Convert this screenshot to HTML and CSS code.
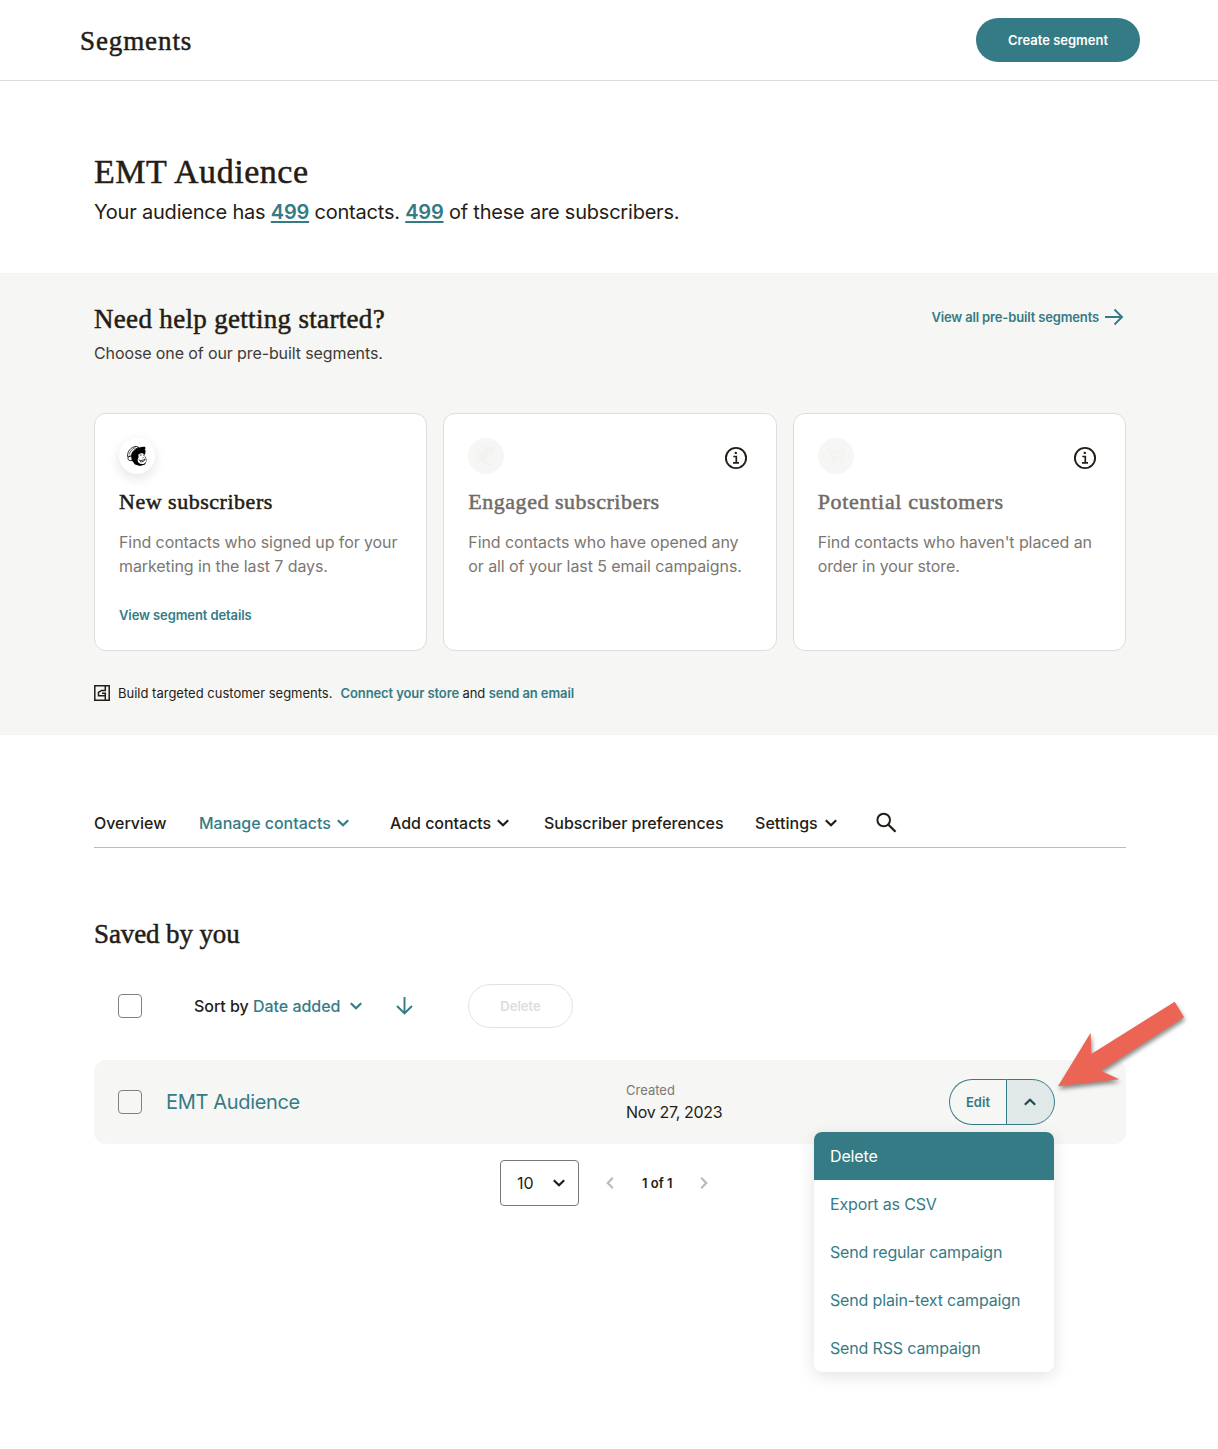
FILE: index.html
```html
<!DOCTYPE html>
<html lang="en">
<head>
<meta charset="utf-8">
<title>Segments</title>
<link rel="stylesheet" href="styles.css">
</head>
<body>
<svg class="defs" width="0" height="0">
  <symbol id="chev" viewBox="0 0 14 10"><path d="M1.800 2.200 7 7.200l5.200-5" fill="none" stroke="currentColor" stroke-width="2.200"/></symbol>
  <symbol id="info" viewBox="0 0 24 24"><circle cx="12" cy="12" r="10.100" fill="none" stroke="currentColor" stroke-width="1.900"/><circle cx="11.800" cy="6.900" r="1.200" fill="currentColor"/><path d="M9.300 10.500h3v6M9 16.900h6" fill="none" stroke="currentColor" stroke-width="1.700"/></symbol>
  <symbol id="chimp" viewBox="0 0 22 22">
    <path d="M5 8 9 5l8-1 2.500 4-1 2 2.500 5-2 4.500-5 1.500-5-1.500L5.500 15z" fill="currentColor"/>
    <path d="M12.200 9.800c1.800-2 5.300-2.200 6.300.2.300 1 .2 1.800.5 2.600 1.400.5 2 1.800 1.300 3.300-.8 2.300-3 3.400-5.300 3-2.500-.4-3.800-2.300-3.300-4.300.6-1.600 1.300-2.300.5-4.800z" fill="var(--face)"/>
    <path d="M13.800 10.200l1.800-.3M17.100 10l1 .2M12.800 15c2 .9 4.200.5 6.600-1.200-.5 2.200-3.500 3.700-5.400 2.800M16.600 12.500l.9.100" fill="none" stroke="currentColor" stroke-width=".8"/>
    <path d="M1.500 11.500C1.300 6.500 4.500 2.200 10 1.300l3 1.200C8.500 3.800 6 6.500 5.300 11z" fill="var(--face)" stroke="currentColor" stroke-width=".8"/>
    <path d="M3.300 9.500C4 6.300 6.300 3.500 9.500 2.500" fill="none" stroke="currentColor" stroke-width=".6"/>
    <path d="M8.500 5.300C11 2.600 15 1.500 18.800 1.700c.9.700.9 2-.1 3.100 1 .6 1.300 1.500.6 2.400-3-1.200-6.800-1-9.800.6z" fill="currentColor"/>
    <path d="M5.700 11.800c-1.900-1.200-4-.2-3.800 1.700.2 1.800 2.200 2.700 4.300 1.800z" fill="var(--face)" stroke="currentColor" stroke-width=".9"/>
  </symbol>
</svg>

<header class="topbar">
  <h1 class="topbar-title">Segments</h1>
  <button class="btn-primary">Create segment</button>
</header>

<section class="hero">
  <h2 class="hero-title">EMT Audience</h2>
  <p class="hero-text">Your audience has <a>499</a> contacts. <a>499</a> of these are subscribers.</p>
</section>

<section class="help">
  <div class="help-head">
    <div>
      <h2 class="heading">Need help getting started?</h2>
      <p class="help-sub">Choose one of our pre-built segments.</p>
    </div>
    <a class="view-all">View all pre-built segments
      <svg width="20" height="18" viewBox="0 0 20 18"><path d="M1 9h17M10.500 1.500 18 9l-7.500 7.500" fill="none" stroke="currentColor" stroke-width="1.900"/></svg>
    </a>
  </div>
  <div class="cards">
    <article class="card">
      <div class="card-top"><span class="badge raised"><svg width="22" height="22"><use href="#chimp"/></svg></span></div>
      <h3 class="card-title">New subscribers</h3>
      <p class="card-text">Find contacts who signed up for your marketing in the last 7 days.</p>
      <a class="card-link">View segment details</a>
    </article>
    <article class="card muted">
      <div class="card-top"><span class="badge"><svg width="22" height="22"><use href="#chimp"/></svg></span><span class="info"><svg width="24" height="24"><use href="#info"/></svg></span></div>
      <h3 class="card-title">Engaged subscribers</h3>
      <p class="card-text">Find contacts who have opened any or all of your last 5 email campaigns.</p>
    </article>
    <article class="card muted">
      <div class="card-top"><span class="badge"><svg width="22" height="22" viewBox="0 0 22 22"><path d="M2 4h3l2.500 10.500H18M5.500 6.500H19L17.500 12H7" fill="none" stroke="currentColor" stroke-width="1.500"/><circle cx="8" cy="18" r="1.500" fill="currentColor"/><circle cx="17" cy="18" r="1.500" fill="currentColor"/></svg></span><span class="info"><svg width="24" height="24"><use href="#info"/></svg></span></div>
      <h3 class="card-title potential">Potential customers</h3>
      <p class="card-text">Find contacts who haven't placed an order in your store.</p>
    </article>
  </div>
  <p class="note">
    <svg width="16" height="16" viewBox="0 0 16 16" fill="none" stroke="currentColor" stroke-width="1.500"><path d="M.8.8h14.400v14.400H.8zM11.300 1v4.500H7.500L4.500 7.500v3.300h6.800M8 8.200h3.300v7"/></svg>
    <span>Build targeted customer segments.</span>
    <span class="note-links"><a>Connect your store</a> and <a>send an email</a></span>
  </p>
</section>

<main class="main">
  <nav class="tabs">
    <a>Overview</a>
    <a class="active">Manage contacts<svg width="14" height="10"><use href="#chev"/></svg></a>
    <a>Add contacts<svg width="14" height="10"><use href="#chev"/></svg></a>
    <a>Subscriber preferences</a>
    <a class="settings">Settings<svg width="14" height="10"><use href="#chev"/></svg></a>
    <a><svg class="search" width="22" height="22" viewBox="0 0 22 22" fill="none" stroke="currentColor" stroke-width="2"><circle cx="7.700" cy="8" r="6.300"/><path d="m12.200 12.500 7.300 7.300" stroke-width="2.300"/></svg></a>
  </nav>

  <h2 class="heading saved">Saved by you</h2>
  <div class="toolbar">
    <span class="checkbox"></span>
    <span class="sort">Sort by <b>Date added</b><svg width="14" height="10"><use href="#chev"/></svg></span>
    <svg class="sort-dir" width="18" height="20" viewBox="0 0 18 20"><path d="M8.500 1v16.500M1 10l7.500 7.300L16 10" fill="none" stroke="currentColor" stroke-width="1.900"/></svg>
    <button class="btn-disabled">Delete</button>
  </div>

  <div class="row">
    <span class="checkbox"></span>
    <a class="row-name">EMT Audience</a>
    <div class="row-meta"><span class="label">Created</span><span class="date">Nov 27, 2023</span></div>
    <div class="split">
      <button class="split-main">Edit</button>
      <button class="split-toggle"><svg class="up" width="14" height="10"><use href="#chev"/></svg></button>
      <ul class="menu">
        <li class="selected">Delete</li>
        <li>Export as CSV</li>
        <li>Send regular campaign</li>
        <li>Send plain-text campaign</li>
        <li>Send RSS campaign</li>
      </ul>
      <svg class="pointer" width="140" height="100" viewBox="0 0 140 100"><path d="M8 89.300 40.700 35.700 41.300 57 124.700 4.700 134 20.300 50.700 73.700 69.300 82.300z" fill="#ec6453"/></svg>
    </div>
  </div>

  <div class="pager">
    <span class="select">10<svg width="14" height="10"><use href="#chev"/></svg></span>
    <svg class="step left" width="14" height="10"><use href="#chev"/></svg>
    <span class="page">1 of 1</span>
    <svg class="step right" width="14" height="10"><use href="#chev"/></svg>
  </div>
</main>
</body>
</html>
```
FILE: styles.css
```css
* { box-sizing: border-box; margin: 0; padding: 0; }
body {
  min-height: 1449px;
  background: #fff;
  color: #241c15;
  font: 16px/24px Inter, "Liberation Sans", sans-serif;
}
.defs { position: absolute; }
svg { display: block; flex: none; }
button { font: inherit; color: inherit; background: none; border: 0; }
a, b { color: #357b86; font-weight: 600; }

h1, h2, h3 {
  font-family: "Liberation Serif", serif;
  font-weight: 400;
  -webkit-text-stroke: .5px currentColor;
}

.topbar {
  display: flex;
  align-items: center;
  justify-content: space-between;
  height: 81px;
  padding: 0 78px 0 80px;
  border-bottom: 1px solid #dedddc;
}
.topbar-title { padding-top: 1px; font-size: 27px; line-height: 36px; letter-spacing: .9px; }
.btn-primary {
  width: 164px;
  height: 44px;
  border-radius: 22px;
  background: #357b86;
  color: #fff;
  font-size: 13px;
  font-weight: 600;
}

.hero { padding: 71px 94px 45px; }
.hero-title { font-size: 34px; line-height: 40px; letter-spacing: .55px; }
.hero-text { margin-top: 4px; font-size: 20px; line-height: 32px; letter-spacing: -.21px; }
.hero-text a { text-decoration: underline; text-decoration-thickness: 2px; text-underline-offset: 2px; }

.help { padding: 28px 92px 32px 94px; background: #f6f6f4; }
.help-head { display: flex; justify-content: space-between; padding-right: 2px; }
.heading { font-size: 27px; line-height: 36px; letter-spacing: .32px; }
.help-sub { margin-top: 4px; color: #403b36; letter-spacing: -.11px; }
.view-all { display: flex; align-items: center; gap: 5px; height: 32px; font-size: 13px; letter-spacing: -.15px; }

.cards { display: grid; grid-template-columns: repeat(3, 1fr); gap: 16px; margin-top: 48px; }
.card {
  height: 238px;
  padding: 24px;
  border: 1px solid #dedddc;
  border-radius: 12px;
  background: #fff;
}
.card-top { display: flex; align-items: flex-end; justify-content: space-between; }
.badge {
  --face: #f6f6f4;
  display: grid;
  place-items: center;
  width: 36px;
  height: 36px;
  border-radius: 50%;
  background: #f6f6f4;
  color: #f2f2f0;
}
.badge.raised { --face: #fff; background: #fff; color: #000; box-shadow: 0 4px 12px rgba(36, 28, 21, .12); }
.info { display: grid; place-items: center; width: 32px; height: 32px; }
.card-title { margin-top: 12px; font-size: 22px; line-height: 32px; letter-spacing: .52px; }
.card-title.potential { letter-spacing: .7px; }
.muted .card-title { color: #716b67; }
.card-text { margin-top: 12px; color: #7c7773; letter-spacing: -.09px; }
.card-link { display: block; margin-top: 27px; font-size: 13px; line-height: 20px; letter-spacing: -.1px; }

.note { display: flex; align-items: center; gap: 8px; margin-top: 32px; font-size: 13px; line-height: 20px; }
.note-links { letter-spacing: -.1px; }

.main { padding: 76px 92px 0 94px; }
.tabs {
  display: grid;
  grid-template-columns: 105px 191px 154px 211px 121px auto;
  height: 37px;
  border-bottom: 1px solid #bdbbb9;
}
.tabs a { display: flex; align-items: center; gap: 5px; height: 24px; color: #241c15; font-weight: 500; letter-spacing: -.03px; }
.tabs a.active { color: #357b86; }
.tabs a.settings { gap: 6px; letter-spacing: .05px; }
.search { color: #241c15; }

.saved { margin-top: 68px; letter-spacing: -.12px; }
.toolbar { display: flex; align-items: center; height: 44px; margin-top: 32px; padding-left: 24px; }
.checkbox { width: 24px; height: 24px; border: 1px solid #84807c; border-radius: 4px; background: #fff; flex: none; }
.row .checkbox { background: transparent; }
.sort { display: flex; align-items: center; width: 202px; margin-left: 52px; font-weight: 500; letter-spacing: -.03px; white-space: pre; }
.sort b { font-weight: 500; }
.sort svg { margin-left: 9px; color: #357b86; }
.sort-dir { color: #357b86; }
.btn-disabled {
  width: 105px;
  height: 44px;
  margin-left: 54px;
  border: 1px solid #e3e3e1;
  border-radius: 22px;
  color: #dedddc;
  font-size: 13px;
  font-weight: 600;
}

.row {
  display: flex;
  align-items: center;
  height: 84px;
  margin-top: 32px;
  padding: 0 71px 0 24px;
  border-radius: 12px;
  background: #f6f6f4;
}
.row-name { width: 460px; margin-left: 24px; font-size: 20px; font-weight: 400; letter-spacing: -.33px; }
.row-meta { display: flex; flex-direction: column; flex: 1; }
.label { color: #7c7773; font-size: 13px; line-height: 20px; }
.date { line-height: 24px; letter-spacing: -.33px; }
.split { position: relative; display: flex; width: 106px; height: 46px; }
.split-main, .split-toggle { border: 1px solid #357b86; color: #357b86; font-size: 13px; font-weight: 600; }
.split-main { width: 57px; border-right: 0; border-radius: 23px 0 0 23px; }
.split-toggle { display: grid; place-items: center; width: 49px; padding-right: 2px; border-radius: 0 23px 23px 0; background: #e1e9e8; color: #1f4a51; }
.up { transform: rotate(180deg); }
.menu {
  position: absolute;
  top: 53px;
  right: 1px;
  width: 240px;
  overflow: hidden;
  border-radius: 8px;
  background: #fff;
  box-shadow: 0 4px 16px rgba(36, 28, 21, .13);
  list-style: none;
}
.menu li { height: 48px; padding: 0 16px; color: #357b86; line-height: 48px; letter-spacing: -.15px; }
.menu .selected { background: #357b86; color: #fff; }
.pointer { position: absolute; left: 101px; top: -82px; filter: drop-shadow(1px 3px 2px rgba(0, 0, 0, .45)); }

.pager { display: flex; align-items: center; margin: 16px 0 0 406px; }
.select {
  display: flex;
  align-items: center;
  justify-content: space-between;
  width: 79px;
  height: 46px;
  padding: 0 12px 0 16px;
  border: 1px solid #7c7773;
  border-radius: 4px;
}
.step { color: #bdbbb9; }
.left { margin-left: 24px; transform: rotate(90deg); }
.right { margin-left: 25px; transform: rotate(-90deg); }
.page { width: 30px; margin-left: 25px; font-size: 13px; font-weight: 600; white-space: nowrap; }
```
